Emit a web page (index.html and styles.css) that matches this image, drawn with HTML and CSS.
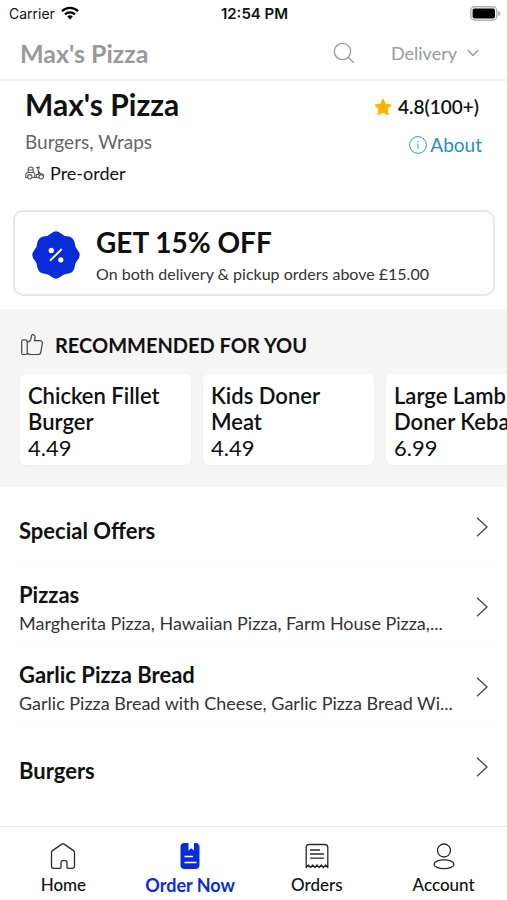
FILE: index.html
```html
<!DOCTYPE html>
<html lang="en">
<head>
<meta charset="utf-8">
<meta name="viewport" content="width=device-width, initial-scale=1">
<title>Max's Pizza</title>
<link rel="stylesheet" href="styles.css">
</head>
<body>
<div class="app">
  <div class="status">
    <span class="status-carrier">Carrier
      <svg width="18" height="14" viewBox="0 0 18 14" fill="none" stroke="#000" stroke-width="2.2" aria-hidden="true"><path d="M1 5.2a11.4 11.4 0 0 1 16 0M4 8.4a7.2 7.2 0 0 1 10 0"/><path d="M9 13.4 6.2 10.6a4 4 0 0 1 5.6 0z" fill="#000" stroke="none"/></svg>
    </span>
    <span class="status-time">12:54 PM</span>
    <span class="status-battery">
      <svg width="30" height="15" viewBox="0 0 30 15" aria-hidden="true"><rect x="0.8" y="0.8" width="26" height="13.4" rx="4" fill="#fff" stroke="#b0b0b0" stroke-width="1.4"/><rect x="2.6" y="2.6" width="22.4" height="9.8" rx="2" fill="#000"/><path d="M28.2 5v5c1.6-.6 2-1.500 2-2.500s-.4-1.900-2-2.500z" fill="#a8a8a8"/></svg>
    </span>
  </div>

  <header class="topbar">
    <span class="topbar-title">Max's Pizza</span>
    <button class="icon-button" type="button" aria-label="Search">
      <svg width="22" height="22" viewBox="0 0 22 22" fill="none" stroke="#999" stroke-width="1.3" aria-hidden="true"><circle cx="9.500" cy="9.500" r="8.200"/><path d="m15.300 15.300 5.400 5.400"/></svg>
    </button>
    <button class="mode" type="button">Delivery
      <svg width="12" height="8" viewBox="0 0 12 8" fill="none" stroke="#999" stroke-width="1.400" aria-hidden="true"><path d="m.8 1 5.200 5.400L11.200 1"/></svg>
    </button>
  </header>

  <main class="content">
    <section class="store">
      <div class="store-main">
        <h1 class="store-name">Max's Pizza</h1>
        <p class="store-tags">Burgers, Wraps</p>
        <p class="store-preorder">
          <svg width="20" height="14" viewBox="0 0 20 14" fill="none" stroke="#555" stroke-width="1.100" stroke-linejoin="round" aria-hidden="true"><circle cx="4.800" cy="10.800" r="2.200"/><circle cx="16.200" cy="10.800" r="2.200"/><path d="M2.500 11.500H.8V9.600C.8 7.800 1.600 6.500 3 6.500h5.300c1 0 1.500.6 1.500 1.500v2c0 .9-.5 1.500-1.400 1.500H7.200M3.200 6.200V3.400C3.200 2 4.200 1 5.700 1s2.500 1 2.500 2.400v2.800M3.200 4h5M9.500 11.500H14M11.500 11.500V8.400h2.300L12.600 1.500h-1.500M13.500 4.500l1.200 3c2.200-.3 3.600.5 4.400 2.200M12.700 1h1.500v1.800"/></svg>
          Pre-order
        </p>
      </div>
      <div class="store-side">
        <p class="rating">
          <svg width="18" height="18" viewBox="0 0 18 18" fill="#ffb300" stroke="#ffb300" stroke-width="1" stroke-linejoin="round" aria-hidden="true"><path d="m9 1 2.500 5.300 5.800.8-4.200 4 1 5.800L9 14.200l-5.100 2.700 1-5.800-4.200-4 5.800-.8z"/></svg>
          4.8(100+)
        </p>
        <a class="about" href="#about">
          <svg width="18" height="18" viewBox="0 0 18 18" fill="none" stroke="#2c9ac4" aria-hidden="true"><circle cx="9" cy="9" r="8.400"/><path d="M9 7.500v5.200M9 4.800v1.400"/></svg>About</a>
      </div>
    </section>

    <section class="offer">
      <svg class="offer-badge" width="48" height="48" viewBox="0 0 48 48" aria-hidden="true"><path fill="#0a2cd8" d="M19 2.400Q24-1.800 29 2.400Q31.800 5 35.500 5.200Q42 6 42.800 12.500Q43 16.200 45.600 19Q49.800 24 45.600 29Q43 31.800 42.800 35.500Q42 42 35.500 42.800Q31.800 43 29 45.600Q24 49.800 19 45.600Q16.200 43 12.500 42.800Q6 42 5.200 35.500Q5 31.800 2.400 29Q-1.800 24 2.400 19Q5 16.200 5.200 12.500Q6 6 12.500 5.200Q16.200 5 19 2.400Z"/><path d="m18.600 29.200 10.600-10.600" stroke="#fff" stroke-width="1.900" stroke-linecap="round"/><circle cx="19.300" cy="19.400" r="2.600" fill="#fff"/><circle cx="28.800" cy="28.800" r="2.600" fill="#fff"/></svg>
      <div class="offer-text">
        <h2 class="offer-title">GET 15% OFF</h2>
        <p class="offer-note">On both delivery &amp; pickup orders above £15.00</p>
      </div>
    </section>

    <section class="picks">
      <h2 class="picks-title">
        <svg width="22" height="22" viewBox="0 0 22 22" fill="none" stroke="#444" stroke-width="1.200" stroke-linejoin="round" aria-hidden="true"><path d="M6.200 8.400V19c0 1-.6 1.500-1.500 1.500H2.300C1.200 20.500.7 20 .7 19V7.500c0-1 .5-1.600 1.600-1.600h2.400c1 0 1.500.6 1.500 1.600zC9 7.400 10.300 5.400 10.200 3c0-1.600.7-2.300 1.700-2.300 1.500 0 2.300 1.300 2.200 3 0 1-.3 2-.8 3h5.400c1.800 0 2.800 1 2.600 2.600l-1.400 8.500c-.3 1.800-1.300 2.700-3 2.700H9.700c-1.500 0-2.500-.3-3.500-1.200"/></svg>
        RECOMMENDED FOR YOU
      </h2>
      <div class="cards">
        <article class="card"><h3 class="card-name">Chicken Fillet Burger</h3><p class="card-price">4.49</p></article>
        <article class="card"><h3 class="card-name">Kids Doner Meat</h3><p class="card-price">4.49</p></article>
        <article class="card"><h3 class="card-name">Large Lamb Doner Kebab</h3><p class="card-price">6.99</p></article>
      </div>
    </section>

    <section class="menu">
      <a class="row" href="#special-offers">
        <span class="row-text"><span class="row-title row-title-only">Special Offers</span></span>
        <svg width="12" height="20" viewBox="0 0 12 20" fill="none" stroke="#444" stroke-width="1.300" aria-hidden="true"><path d="m1 .8 10 9.200L1 19.200"/></svg>
      </a>
      <a class="row" href="#pizzas">
        <span class="row-text"><span class="row-title">Pizzas</span><span class="row-note">Margherita Pizza, Hawaiian Pizza, Farm House Pizza,...</span></span>
        <svg width="12" height="20" viewBox="0 0 12 20" fill="none" stroke="#444" stroke-width="1.300" aria-hidden="true"><path d="m1 .8 10 9.200L1 19.200"/></svg>
      </a>
      <a class="row" href="#garlic-pizza-bread">
        <span class="row-text"><span class="row-title">Garlic Pizza Bread</span><span class="row-note">Garlic Pizza Bread with Cheese, Garlic Pizza Bread Wi...</span></span>
        <svg width="12" height="20" viewBox="0 0 12 20" fill="none" stroke="#444" stroke-width="1.300" aria-hidden="true"><path d="m1 .8 10 9.200L1 19.200"/></svg>
      </a>
      <a class="row" href="#burgers">
        <span class="row-text"><span class="row-title row-title-only">Burgers</span></span>
        <svg width="12" height="20" viewBox="0 0 12 20" fill="none" stroke="#444" stroke-width="1.300" aria-hidden="true"><path d="m1 .8 10 9.200L1 19.200"/></svg>
      </a>
    </section>
  </main>

  <nav class="tabs">
    <a class="tab" href="#home">
      <svg width="28" height="28" viewBox="0 0 28 28" fill="none" stroke="#2a2a2a" stroke-width="1.300" stroke-linejoin="round" aria-hidden="true"><path d="M2.500 10.500c0-.8.300-1.400 1-1.900l9.400-6.500q1.100-.8 2.200 0l9.400 6.500c.7.500 1 1.100 1 1.900v14c0 1.200-.6 1.800-1.800 1.800h-4.500c-.8 0-1.200-.4-1.200-1.200v-4.600c0-1.200-.6-1.800-1.800-1.800h-2.400c-1.200 0-1.800.6-1.800 1.800v4.600c0 .8-.4 1.200-1.200 1.200H4.300c-1.200 0-1.800-.6-1.800-1.800z"/></svg>
      Home
    </a>
    <a class="tab tab-active" href="#order" aria-current="page">
      <svg width="28" height="28" viewBox="0 0 28 28" aria-hidden="true"><path fill="#0a2cd8" d="M8.500 1h4v7.500l2.700-2.200L18 8.500V1h1.500a4 4 0 0 1 4 4v18a4 4 0 0 1-4 4h-11a4 4 0 0 1-4-4V5a4 4 0 0 1 4-4z"/><path d="M8.500 14.500H17M8.500 20.500h12" stroke="#fff" stroke-width="1.400"/></svg>
      Order Now
    </a>
    <a class="tab" href="#orders">
      <svg width="28" height="28" viewBox="0 0 28 28" fill="none" stroke="#2a2a2a" stroke-width="1.300" stroke-linejoin="round" aria-hidden="true"><path d="M3.200 25.500V5.500c0-2 1-3 3-3h15.600c2 0 3 1 3 3v20l-2.200-2.500-2.100 2.500-2.200-2.500-2.100 2.500-2.200-2.500-2.100 2.500-2.200-2.500-2.100 2.500-2.200-2.500z"/><path d="M7 8h10M7 12h14M7 16.200h14"/></svg>
      Orders
    </a>
    <a class="tab" href="#account">
      <svg width="28" height="28" viewBox="0 0 28 28" fill="none" stroke="#2a2a2a" stroke-width="1.300" aria-hidden="true"><circle cx="14" cy="8.500" r="6.500"/><ellipse cx="14" cy="22.200" rx="10" ry="4.400"/></svg>
      Account
    </a>
  </nav>
</div>
</body>
</html>
```
FILE: styles.css
```css
* { box-sizing: border-box; }
body, h1, h2, h3, p { margin: 0; }
body {
  font-family: Lato, "Liberation Sans", sans-serif;
  color: #111;
  background: #fff;
}
svg { display: block; flex: none; overflow: visible; }
a { color: inherit; text-decoration: none; }
button { border: 0; padding: 0; background: none; font: inherit; color: inherit; }

.app { display: flex; flex-direction: column; min-height: 100vh; }

.status {
  display: grid;
  grid-template-columns: 1fr auto 1fr;
  align-items: center;
  height: 26px;
  padding: 0 7px 0 9px;
  font-family: Inter, sans-serif;
  font-size: 14px;
}
.status-carrier { display: flex; align-items: center; gap: 6px; }
.status-time { font-size: 15px; font-weight: 600; }
.status-battery { justify-self: end; }

.topbar {
  display: flex;
  align-items: center;
  height: 55px;
  padding: 0 28px 0 20px;
  border-bottom: 2px solid #f4f4f4;
  color: #999;
}
.topbar-title { flex: 1; font-size: 25px; font-weight: 700; }
.icon-button { margin-right: 36px; }
.mode { display: flex; align-items: center; gap: 10px; font-size: 18px; }

.content { flex: 1; }

.store { display: flex; justify-content: space-between; padding: 5px 25px 0; }
.store-name { font-size: 30px; line-height: 36px; font-weight: 700; }
.store-tags { margin-top: 8px; font-size: 19px; line-height: 24px; color: #666; }
.store-preorder { display: flex; align-items: center; gap: 5px; margin-top: 8px; font-size: 18px; line-height: 22px; }
.store-side { display: flex; flex-direction: column; align-items: flex-end; gap: 14px; padding-top: 9px; }
.rating { display: flex; align-items: center; gap: 6px; padding-right: 3px; font-size: 19px; line-height: 24px; font-weight: 600; }
.about { display: flex; align-items: center; gap: 3px; font-size: 19px; line-height: 24px; color: #2490bd; }

.offer {
  display: flex;
  align-items: center;
  gap: 16px;
  margin: 26px 12px 13px 13px;
  padding: 13px 17px 9px;
  border: 2px solid #e8e8e8;
  border-radius: 10px;
}
.offer-title { font-size: 28px; line-height: 34px; font-weight: 700; }
.offer-note { margin-top: 4px; font-size: 16px; line-height: 22px; color: #333; }

.picks { padding: 23px 0 22px 21px; background: #f5f5f5; overflow: hidden; }
.picks-title { display: flex; align-items: center; gap: 12px; font-size: 20px; line-height: 26px; font-weight: 700; }
.cards { display: flex; gap: 12px; margin: 16px 0 0 -1px; }
.card { flex: none; width: 171px; padding: 9px 8px 4px; border-radius: 6px; background: #fff; box-shadow: 0 1px 3px #00000008; }
.card-name { font-size: 22px; line-height: 26px; font-weight: 600; }
.card-price { font-size: 22px; line-height: 26px; }

.menu { padding: 0 12px 0 15px; }
.row { display: flex; align-items: center; justify-content: space-between; min-height: 80px; padding: 0 7px 0 4px; border-bottom: 1px solid #f8f8f8; }
.row:last-child { border-bottom: 0; }
.row-text { display: flex; flex-direction: column; gap: 2px; padding-top: 2px; }
.row-title { font-size: 22px; line-height: 28px; font-weight: 700; }
.row-title-only { padding-top: 6px; }
.row-note { font-size: 18px; line-height: 24px; color: #333; }

.tabs { display: grid; grid-template-columns: repeat(4, 1fr); border-top: 1px solid #e6e6e6; padding: 15px 0 4px; }
.tab { display: flex; flex-direction: column; align-items: center; gap: 4px; font-size: 17px; line-height: 22px; font-weight: 500; }
.tab-active { color: #0a2cd8; font-size: 18px; font-weight: 700; }
```
